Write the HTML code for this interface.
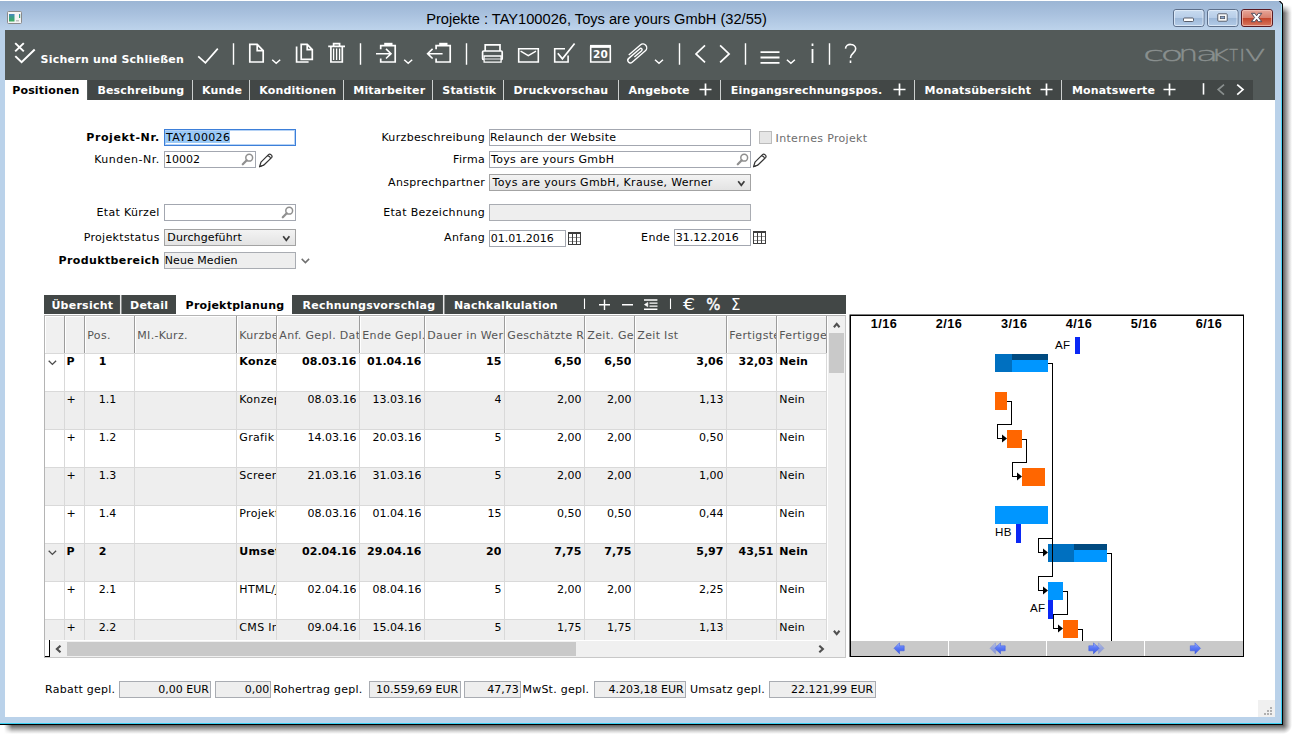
<!DOCTYPE html>
<html lang="de"><head><meta charset="utf-8"><title>Projekte</title>
<style>
*{box-sizing:border-box;margin:0;padding:0}
html,body{width:1298px;height:740px;overflow:hidden;background:#fff}
body{position:relative;font-family:"DejaVu Sans","Liberation Sans",sans-serif;font-size:11px;letter-spacing:.33px;color:#000}
.abs{position:absolute}
#shadowR{left:1283px;top:5px;width:9px;height:720px;background:linear-gradient(to right,#5e5e5e,#9a9a9a 35%,#d8d8d8 70%,#fff);-webkit-mask-image:linear-gradient(to bottom,transparent,#000 8px);mask-image:linear-gradient(to bottom,transparent,#000 8px)}
#shadowB{left:4px;top:725px;width:1279px;height:9px;background:linear-gradient(to bottom,#5e5e5e,#9a9a9a 35%,#d8d8d8 70%,#fff);-webkit-mask-image:linear-gradient(to right,transparent,#000 8px);mask-image:linear-gradient(to right,transparent,#000 8px)}
#shadowC{left:1283px;top:725px;width:9px;height:9px;background:radial-gradient(circle 9px at 0 0,#5e5e5e,#9a9a9a 35%,#d8d8d8 70%,#fff 100%)}
#cyR{left:1281px;top:3px;width:1px;height:720px;background:linear-gradient(to bottom,#a6e6f8,#4fd6f6 12%,#3ad2f5)}
#cyB{left:0;top:722px;width:1282px;height:1px;background:#3ad2f5}
#win{left:0;top:1px;width:1283px;height:724px;background:#bad2ea;border-right:1px solid #000;border-bottom:1px solid #000}
#titlebar{left:0;top:0;width:1282px;height:29px;background:linear-gradient(to bottom,#9bb5d4 0%,#a9c1de 45%,#bdd3eb 100%)}
#title{left:0;top:10px;width:1193px;text-align:center;font-family:"Liberation Sans",sans-serif;font-size:14.65px;letter-spacing:0;color:#000;white-space:nowrap}
#client{left:5px;top:29px;width:1270px;height:687px;background:#fff;overflow:hidden}
#toolbar{left:0;top:0;width:1270px;height:50px;background:#535a59}
#tabrow{left:0;top:50px;width:1270px;height:20px;background:#535a59}
.tab{position:absolute;top:0;height:20px;background:#424746;color:#fff;font-weight:bold;font-size:11px;letter-spacing:.17px;line-height:21px;white-space:nowrap}
.tab.act{background:#fff;color:#000}
.lbl{position:absolute;white-space:nowrap;text-align:right;height:16px;line-height:16px}
.b{font-weight:bold;letter-spacing:.4px}
.inp{position:absolute;border:1px solid #a3a7b0;background:#fff;white-space:nowrap;overflow:hidden}
.inp span{position:absolute;left:1.5px;top:0;line-height:15px;z-index:1}
.inp.g{background:#eee;border-color:#a9acb2}
.inp.sel{background:linear-gradient(to bottom,#f3f3f3,#e3e3e3);border-color:#a3a3a3}
.inp.foc{border-color:#3d7fd9;box-shadow:inset 0 0 0 1px #b5d2f5}
.hl{background:#99c9f7}
.num{letter-spacing:0}
</style></head><body>
<div class="abs" id="shadowR"></div><div class="abs" id="shadowB"></div><div class="abs" id="shadowC"></div>
<div class="abs" id="win">
<div class="abs" id="titlebar"></div><div class="abs" id="cyR"></div><div class="abs" id="cyB"></div>
<svg class="abs" style="left:1278px;top:0" width="5" height="5" viewBox="0 0 5 5"><path d="M1.500 0H5V3.500z" fill="#fff"/><path d="M1.200 -.300L5.300 3.800" stroke="#000" stroke-width="1.200" fill="none"/></svg>
<svg class="abs" style="left:7px;top:10px" width="15" height="13" viewBox="0 0 15 13"><rect x=".5" y=".5" width="14" height="12" rx="1" fill="#f4f4f4" stroke="#8a8a8a"/><defs><linearGradient id="ig" x1="0" y1="0" x2="0" y2="1"><stop offset="0" stop-color="#4a84c4"/><stop offset=".35" stop-color="#3a9a90"/><stop offset="1" stop-color="#3cac5c"/></linearGradient></defs><rect x="2" y="3" width="5.500" height="7.500" fill="url(#ig)"/><rect x="12" y="3" width="1.200" height="4" fill="url(#ig)"/><rect x="9" y="9" width="3" height="1.500" fill="#c0c0c0"/></svg><svg class="abs" style="left:1170px;top:6px" width="106" height="24" viewBox="1170 7 106 24"><defs><linearGradient id="cb" x1="0" y1="0" x2="0" y2="1"><stop offset="0" stop-color="#c9dcf0"/><stop offset=".48" stop-color="#b7cde8"/><stop offset=".5" stop-color="#9db8d8"/><stop offset="1" stop-color="#b4cce8"/></linearGradient><linearGradient id="cr" x1="0" y1="0" x2="0" y2="1"><stop offset="0" stop-color="#e8a99c"/><stop offset=".48" stop-color="#d8806e"/><stop offset=".5" stop-color="#c2432a"/><stop offset="1" stop-color="#d97a62"/></linearGradient></defs><rect x="1173.500" y="9.500" width="30.500" height="17" rx="2.500" fill="url(#cb)" stroke="#5d6f8a"/><rect x="1174.500" y="10.500" width="28.500" height="15" rx="1.500" fill="none" stroke="#e4eefa" stroke-opacity=".8"/><rect x="1207.500" y="9.500" width="30.500" height="17" rx="2.500" fill="url(#cb)" stroke="#5d6f8a"/><rect x="1208.500" y="10.500" width="28.500" height="15" rx="1.500" fill="none" stroke="#e4eefa" stroke-opacity=".8"/><rect x="1241.500" y="9.500" width="31" height="17" rx="2.500" fill="url(#cr)" stroke="#5a1a22"/><rect x="1242.500" y="10.500" width="29" height="15" rx="1.500" fill="none" stroke="#f2c4ba" stroke-opacity=".7"/><rect x="1183.500" y="18" width="10" height="3.500" rx="1" fill="#fff" stroke="#4a4f5c" stroke-width=".9"/><rect x="1217.800" y="13.800" width="9.400" height="7.400" rx=".8" fill="#fff" stroke="#4a4f5c" stroke-width=".9"/><rect x="1220.300" y="16.300" width="4.400" height="2.400" fill="#8aa6cc" stroke="#4a4f5c" stroke-width=".7"/><path d="M1251.4 13.3L1254.9 13.3L1256.6 15.8L1258.3 13.3L1261.8 13.3L1258.6 17.5L1261.8 21.7L1258.3 21.7L1256.6 19.2L1254.9 21.7L1251.4 21.7L1254.6 17.5z" fill="#fff" stroke="#4d4a5a" stroke-width="1" stroke-linejoin="round"/></svg>
<div class="abs" id="title">Projekte : TAY100026, Toys are yours GmbH (32/55)</div>
<div class="abs" id="client">
<div class="abs" id="toolbar"><svg class="abs" style="left:0;top:0" width="1270" height="50" viewBox="5 30 1270 50" fill="none" stroke="#fff" stroke-width="1.7" stroke-linecap="butt" stroke-linejoin="miter">
<path d="M15.200 43.100l8.600 8.300M23.800 43.100l-8.600 8.300" stroke-width="2"/>
<path d="M15.300 56.100l6.300 6.100 13.100-12.700" stroke-width="2"/>
<path d="M198.200 56.400l7.200 6.400 12.400-14.200"/>
<path d="M233.500 43.200v21.600M360.500 43.200v21.600M466.500 43.200v21.600M679.500 43.200v21.600M745.500 43.200v21.600M829.500 43.200v21.600" stroke-width="1.400"/>
<path d="M249.800 44.400h7.400l6 6.200V62h-13.400zM257.200 44.400v6.200h6"/>
<path d="M272.200 59.700l4 3.500 4-3.500" stroke-width="1.500"/>
<path d="M301.200 44.400h6l5.100 5.300v9.700h-11.100zM307.200 44.400v5.300h5.100M296.600 46.400V62h12"/>
<path d="M328.200 46.400h16.800M333.600 46.200v-2.600h6v2.600M330.900 46.800V62h11.400V46.800"/>
<path d="M333.600 48.600v11.400M336.600 48.600v11.400M339.600 48.600v11.400" stroke-width="1.300"/>
<path d="M380.700 49.200v-3.500h14.500V62h-14.500v-3.600"/>
<path d="M384.200 44.100h8.300" stroke-width="2.600"/>
<path d="M376 53.700h14.600M386 48.900l5 4.800-5 4.800" stroke-width="1.600"/>
<path d="M404.200 59.700l4 3.500 4-3.500" stroke-width="1.500"/>
<path d="M436.100 49.200v-3.500h14.100V62h-14.100v-3.600"/>
<path d="M439.200 44.100h8.300" stroke-width="2.600"/>
<path d="M428.400 53.700h14.200M432.600 48.900l-5 4.800 5 4.800" stroke-width="1.600"/>
<path d="M485.200 51v-6.100h14.800V51"/>
<path d="M484 59.400h-.4a1 1 0 0 1-1-1V52a1 1 0 0 1 1-1h17.600a1 1 0 0 1 1 1v6.400a1 1 0 0 1-1 1h-.4"/>
<path d="M484.100 56h17v6.100h-17z" stroke-width="1.300"/><path d="M484.500 59h16.200" stroke-width=".900"/>
<path d="M518.700 48.800h19.600V62h-19.600z" stroke-width="1.600"/><path d="M520.600 51.200l7.700 4.400 7.700-4.400" stroke-width="1.400"/>
<path d="M565 48.800h-10.300V62h13.400v-6.400" stroke-width="1.600"/>
<path d="M557.800 53.200l4.600 5.700 12.200-15.400"/>
<path d="M590.700 47h19.600v15h-19.600z" stroke-width="1.600"/><path d="M590 46.200h21" stroke-width="2.600"/>
<g transform="translate(636.700 53.200) rotate(-41) scale(1.2)"><path d="M-3.500 1.100H4.500A1.100 1.100 0 0 0 4.500-1.100H-7.850A2.150 2.150 0 0 0-7.850 3.200H6.800A3.200 3.200 0 0 0 6.800-3.200H-6" stroke-width="1.150"/></g>
<path d="M655 59.700l4 3.500 4-3.500" stroke-width="1.500"/>
<path d="M705 45.400l-9 8.500 9 8.500M720.100 45.400l9 8.500-9 8.500"/>
<path d="M760.500 52.100h19M760.500 57.500h19M760.500 62.800h19" stroke-width="1.800"/>
<path d="M786.900 59.700l4 3.500 4-3.500" stroke-width="1.500"/>
<path d="M812.500 43.600v2.400M812.500 48.900v14.200" stroke-width="1.800"/>
<path d="M845.500 48.600c.2-5.600 10.200-5.600 10.200.2 0 4-5.200 4.200-5.200 9.200M850.500 60.400v2.700" stroke-width="1.600"/>
<text x="600.600" y="57.700" text-anchor="middle" fill="#fff" stroke="none" font-family="DejaVu Sans,sans-serif" font-weight="bold" font-size="10.500">20</text>
<text x="40.600" y="63.200" fill="#fff" stroke="none" font-family="DejaVu Sans,sans-serif" font-weight="bold" font-size="11" letter-spacing=".24">Sichern und Schließen</text>
<g fill="#8a908f" stroke="#8a908f" stroke-width=".35" font-family="DejaVu Sans,sans-serif" font-weight="200"><text transform="translate(1143.10 60.9) scale(1.929 1)" font-size="20">c</text><text transform="translate(1160.60 60.9) scale(1.878 1)" font-size="20">o</text><text transform="translate(1178.35 60.7) scale(1.547 1)" font-size="20.5">n</text><text transform="translate(1195.63 60.9) scale(1.857 1)" font-size="20">a</text><text transform="translate(1211.11 60.7) scale(1.815 1)" font-size="15.4">K</text><text transform="translate(1229.31 60.7) scale(0.934 1)" font-size="15.4">T</text><text transform="translate(1239.200 60.700) scale(1.300 1)" font-size="15.4">I</text><text transform="translate(1245.13 60.7) scale(1.885 1)" font-size="15.4">V</text></g>
</svg>
</div>
<div class="abs" id="tabrow"><div class="tab act" style="left:0px;width:82px;padding-left:7.2px">Positionen</div><div class="tab" style="left:83px;width:104px;padding-left:9.4px">Beschreibung</div><div class="tab" style="left:188px;width:56px;padding-left:9px">Kunde</div><div class="tab" style="left:245px;width:93px;padding-left:9.2px">Konditionen</div><div class="tab" style="left:339px;width:88px;padding-left:9.3px">Mitarbeiter</div><div class="tab" style="left:428px;width:70px;padding-left:9.3px">Statistik</div><div class="tab" style="left:499px;width:114px;padding-left:9.5px">Druckvorschau</div><div class="tab" style="left:614px;width:101px;padding-left:9.5px">Angebote</div><div class="tab" style="left:716px;width:193px;padding-left:9.8px">Eingangsrechnungspos.</div><div class="tab" style="left:910px;width:146px;padding-left:9.6px">Monatsübersicht</div><div class="tab" style="left:1057px;width:138px;padding-left:9.9px">Monatswerte</div><div class="tab" style="left:1195px;width:53px"></div><svg class="abs" style="left:0;top:0" width="1270" height="20" viewBox="5 80 1270 20" fill="none" stroke="#fff" stroke-width="1.700"><path d="M699.5 89.5h12M705.5 83.5v12"/><path d="M893.5 89.5h12M899.5 83.5v12"/><path d="M1040.5 89.5h12M1046.5 83.5v12"/><path d="M1163.5 89.5h12M1169.5 83.5v12"/><path d="M192.5 80v20M249.5 80v20M343.5 80v20M432.5 80v20M503.5 80v20M618.5 80v20M720.5 80v20M914.5 80v20M1061.5 80v20" stroke="#cdd0cf" stroke-width="1"/><path d="M1203.500 83.200v11.400" stroke-width="1.600"/><path d="M1224 84.600l-5.800 5 5.800 5" stroke="#8a908f" stroke-width="1.700"/><path d="M1237.200 84.600l5.800 5-5.800 5" stroke-width="1.700"/></svg></div>
<div class="lbl b" style="right:1115.3px;top:100px;letter-spacing:0.62px">Projekt-Nr.</div><div class="inp foc" style="left:159px;top:99px;width:132px;height:17px"><span style="left:1px">TAY100026</span><div class="abs hl" style="left:0;top:.5px;width:64.5px;height:12.5px"></div></div><div class="lbl" style="right:1115.3px;top:122px;letter-spacing:0.5px">Kunden-Nr.</div><div class="inp " style="left:159px;top:121px;width:92px;height:17px"><span class="num" style="left:0px">10002</span><svg class="abs" style="left:76px;top:1.4px" width="14" height="13" viewBox="0 0 14 13" fill="none"><circle cx="8.200" cy="4.700" r="3.400" stroke="#8f8f8f" stroke-width="1.500" fill="#fff"/><path d="M5.700 7.300L1.800 11.200" stroke="#909090" stroke-width="2.300" stroke-linecap="round"/></svg></div><svg class="abs" style="left:252.6px;top:122.6px" width="16" height="15" viewBox="-.4 0 14.600 13.700" fill="none" stroke="#333" stroke-width="1.1" stroke-linejoin="round"><path d="M1 12.6l1.300-4.200L9.200 1.500c1.400-1.300 4.200 1.100 2.800 2.700L5 11z"/><path d="M8 2.700c1.500-.4 3.200 1.200 2.900 2.700M1 12.600l4-1.600"/></svg><div class="lbl" style="right:1115.3px;top:175px">Etat Kürzel</div><div class="inp " style="left:159px;top:174px;width:132px;height:17px"><svg class="abs" style="left:116px;top:1.4px" width="14" height="13" viewBox="0 0 14 13" fill="none"><circle cx="8.200" cy="4.700" r="3.400" stroke="#8f8f8f" stroke-width="1.500" fill="#fff"/><path d="M5.700 7.300L1.800 11.200" stroke="#909090" stroke-width="2.300" stroke-linecap="round"/></svg></div><div class="lbl" style="right:1115.3px;top:200px">Projektstatus</div><div class="inp sel" style="left:159px;top:199px;width:132px;height:17px"><span style="left:2.3px;letter-spacing:0.12px">Durchgeführt</span><svg class="abs" style="left:117.4px;top:4.6px" width="9" height="7" viewBox="0 0 9 7" fill="none" stroke="#3c3c3c" stroke-width="1.700"><path d="M1.200 1.300l3.100 4L7.400 1.300"/></svg></div><div class="lbl b" style="right:1115.3px;top:223px">Produktbereich</div><div class="inp g" style="left:159px;top:222px;width:132px;height:17px"><span style="left:-0.2px;letter-spacing:0.05px">Neue Medien</span></div><svg class="abs" style="left:296px;top:228px" width="10" height="6" viewBox="0 0 10 6" fill="none" stroke="#707070" stroke-width="1.500"><path d="M.700.900l3.700 3.700L8.100.900"/></svg><div class="lbl" style="right:789.9px;top:100px">Kurzbeschreibung</div><div class="inp " style="left:484px;top:99px;width:262px;height:17px"><span style="left:0px">Relaunch der Website</span></div><div class="abs" style="left:754px;top:101px;width:13px;height:13px;border:1px solid #bcbcbc;background:#e6e6e6"></div><div class="lbl" style="left:770.6px;top:101px;text-align:left;color:#6d6d6d">Internes Projekt</div><div class="lbl" style="right:789.9px;top:122px">Firma</div><div class="inp " style="left:484px;top:121px;width:262px;height:17px"><span style="left:1px">Toys are yours GmbH</span><svg class="abs" style="left:246.4px;top:1.4px" width="14" height="13" viewBox="0 0 14 13" fill="none"><circle cx="8.200" cy="4.700" r="3.400" stroke="#8f8f8f" stroke-width="1.500" fill="#fff"/><path d="M5.700 7.300L1.800 11.200" stroke="#909090" stroke-width="2.300" stroke-linecap="round"/></svg></div><svg class="abs" style="left:747.4px;top:122.6px" width="16" height="15" viewBox="-.4 0 14.600 13.700" fill="none" stroke="#333" stroke-width="1.1" stroke-linejoin="round"><path d="M1 12.6l1.300-4.200L9.200 1.500c1.400-1.300 4.200 1.100 2.800 2.700L5 11z"/><path d="M8 2.700c1.500-.4 3.200 1.200 2.900 2.700M1 12.600l4-1.600"/></svg><div class="lbl" style="right:789.9px;top:145px">Ansprechpartner</div><div class="inp sel" style="left:484px;top:144px;width:262px;height:17px"><span style="left:2.6px">Toys are yours GmbH, Krause, Werner</span><svg class="abs" style="left:247.4px;top:4.8px" width="9" height="7" viewBox="0 0 9 7" fill="none" stroke="#3c3c3c" stroke-width="1.700"><path d="M1.200 1.300l3.100 4L7.400 1.300"/></svg></div><div class="lbl" style="right:789.9px;top:175px">Etat Bezeichnung</div><div class="inp g" style="left:484px;top:174px;width:262px;height:17px"></div><div class="lbl" style="right:789.9px;top:200px">Anfang</div><div class="inp " style="left:484px;top:200px;width:77px;height:17px"><span class="num" style="left:0.8px">01.01.2016</span></div><svg class="abs" style="left:563px;top:202px" width="13" height="13" viewBox="0 0 13 13" fill="none" shape-rendering="crispEdges"><rect x="0" y="0" width="13" height="13" fill="#fff"/><path d="M0 5.500h13M0 9.500h13" stroke="#9a9a9a" stroke-width="1"/><path d="M.500 0v13M4.500 0v13M8.500 0v13M12.500 0v13M0 12.500h13" stroke="#3e3e3e" stroke-width="1"/><path d="M0 1h13" stroke="#3e3e3e" stroke-width="2"/></svg><div class="lbl" style="right:604.9px;top:200px">Ende</div><div class="inp " style="left:669px;top:199px;width:77px;height:17px"><span class="num" style="left:0.8px">31.12.2016</span></div><svg class="abs" style="left:748px;top:201px" width="13" height="13" viewBox="0 0 13 13" fill="none" shape-rendering="crispEdges"><rect x="0" y="0" width="13" height="13" fill="#fff"/><path d="M0 5.500h13M0 9.500h13" stroke="#9a9a9a" stroke-width="1"/><path d="M.500 0v13M4.500 0v13M8.500 0v13M12.500 0v13M0 12.500h13" stroke="#3e3e3e" stroke-width="1"/><path d="M0 1h13" stroke="#3e3e3e" stroke-width="2"/></svg>
<div class="abs" style="left:39px;top:265px;width:802px;height:19px;background:#424746"></div><div class="abs" style="left:39px;top:265px;width:76px;height:19px;color:#fff;font-weight:bold;line-height:22px;letter-spacing:.25px;white-space:nowrap;padding-left:7.4px">Übersicht</div><div class="abs" style="left:116.5px;top:265px;width:54.5px;height:19px;color:#fff;font-weight:bold;line-height:22px;letter-spacing:.25px;white-space:nowrap;padding-left:8.5px">Detail</div><div class="abs" style="left:171px;top:265px;width:116px;height:19px;background:#fff;color:#000;font-weight:bold;line-height:22px;letter-spacing:.25px;white-space:nowrap;padding-left:9.6px">Projektplanung</div><div class="abs" style="left:287px;top:265px;width:151px;height:19px;color:#fff;font-weight:bold;line-height:22px;letter-spacing:.25px;white-space:nowrap;padding-left:10.5px">Rechnungsvorschlag</div><div class="abs" style="left:439.5px;top:265px;width:139.5px;height:19px;color:#fff;font-weight:bold;line-height:22px;letter-spacing:.25px;white-space:nowrap;padding-left:9.4px">Nachkalkulation</div><svg class="abs" style="left:39px;top:265px" width="802" height="19" viewBox="44 295 802 19" fill="none" stroke="#fff"><path d="M120.7 295v19M443.7 295v19" stroke-width="1.5" stroke="#e8e8e8"/><path d="M584.500 298.500v10.500M670.500 298.500v10.500" stroke-width="1.100"/><path d="M599 304.700h11M604.500 299.500v10.500M622 304.700h11" stroke-width="1.400"/><path d="M644 300h13.400M649.500 303.100h8M649.500 306.100h8M644 309.200h13.400" stroke-width="1.400"/><path d="M647.800 302.400l-3.400 2.200 3.400 2.200z" fill="#fff" stroke-width=".6"/><text x="683" y="310.200" fill="#fff" stroke="none" font-family="DejaVu Sans,sans-serif" font-size="16.500" textLength="12.500" lengthAdjust="spacingAndGlyphs">€</text><text x="706.300" y="310" fill="#fff" font-family="DejaVu Sans,sans-serif" font-size="15.500" textLength="14.500" lengthAdjust="spacingAndGlyphs" stroke="#fff" stroke-width=".4">%</text><text x="731" y="310" fill="#fff" stroke="none" font-family="DejaVu Sans,sans-serif" font-size="15">Σ</text></svg><div class="abs" style="left:39px;top:285px;width:802px;height:343px;border:1px solid #b4b4b4;border-right-color:#c8c8c8;border-bottom-color:#c8c8c8;background:#fff;overflow:hidden"><div class="abs" style="left:0;top:0;width:782px;height:38px;background:#f0f0f0;border-top:1px solid #fff;border-bottom:1px solid #a0a0a0"></div><div class="abs" style="left:19px;top:0;width:2px;height:37px;background:#9c9c9c;border-right:1px solid #fff"></div><div class="abs" style="left:39px;top:0;width:2px;height:37px;background:#9c9c9c;border-right:1px solid #fff"></div><div class="abs" style="left:89px;top:0;width:2px;height:37px;background:#9c9c9c;border-right:1px solid #fff"></div><div class="abs" style="left:191px;top:0;width:2px;height:37px;background:#9c9c9c;border-right:1px solid #fff"></div><div class="abs" style="left:231px;top:0;width:2px;height:37px;background:#9c9c9c;border-right:1px solid #fff"></div><div class="abs" style="left:314px;top:0;width:2px;height:37px;background:#9c9c9c;border-right:1px solid #fff"></div><div class="abs" style="left:379px;top:0;width:2px;height:37px;background:#9c9c9c;border-right:1px solid #fff"></div><div class="abs" style="left:459px;top:0;width:2px;height:37px;background:#9c9c9c;border-right:1px solid #fff"></div><div class="abs" style="left:539px;top:0;width:2px;height:37px;background:#9c9c9c;border-right:1px solid #fff"></div><div class="abs" style="left:589px;top:0;width:2px;height:37px;background:#9c9c9c;border-right:1px solid #fff"></div><div class="abs" style="left:681px;top:0;width:2px;height:37px;background:#9c9c9c;border-right:1px solid #fff"></div><div class="abs" style="left:731px;top:0;width:2px;height:37px;background:#9c9c9c;border-right:1px solid #fff"></div><div class="abs" style="left:781px;top:0;width:2px;height:37px;background:#9c9c9c;border-right:1px solid #fff"></div><div class="abs" style="left:0;top:1px;width:1px;height:36px;background:#fff"></div><div class="abs" style="left:42.3px;top:12px;width:46.7px;height:16px;line-height:16px;color:#555;white-space:nowrap;overflow:hidden">Pos.</div><div class="abs" style="left:92.3px;top:12px;width:98.7px;height:16px;line-height:16px;color:#555;white-space:nowrap;overflow:hidden">MI.-Kurz.</div><div class="abs" style="left:194.3px;top:12px;width:36.7px;height:16px;line-height:16px;color:#555;white-space:nowrap;overflow:hidden">Kurzbeschreibung</div><div class="abs" style="left:234.3px;top:12px;width:79.7px;height:16px;line-height:16px;color:#555;white-space:nowrap;overflow:hidden">Anf. Gepl. Datum</div><div class="abs" style="left:317.3px;top:12px;width:61.7px;height:16px;line-height:16px;color:#555;white-space:nowrap;overflow:hidden">Ende Gepl. Datum</div><div class="abs" style="left:382.3px;top:12px;width:76.7px;height:16px;line-height:16px;color:#555;white-space:nowrap;overflow:hidden">Dauer in Werktagen</div><div class="abs" style="left:462.3px;top:12px;width:76.7px;height:16px;line-height:16px;color:#555;white-space:nowrap;overflow:hidden">Geschätzte Restzeit</div><div class="abs" style="left:542.3px;top:12px;width:46.7px;height:16px;line-height:16px;color:#555;white-space:nowrap;overflow:hidden">Zeit. Gepl.</div><div class="abs" style="left:592.3px;top:12px;width:88.7px;height:16px;line-height:16px;color:#555;white-space:nowrap;overflow:hidden">Zeit Ist</div><div class="abs" style="left:684.3px;top:12px;width:46.7px;height:16px;line-height:16px;color:#555;white-space:nowrap;overflow:hidden">Fertigstellungsgrad</div><div class="abs" style="left:734.3px;top:12px;width:46.7px;height:16px;line-height:16px;color:#555;white-space:nowrap;overflow:hidden">Fertiggestellt</div><div class="abs" style="left:0;top:37px;width:782px;height:38px;background:#fff;border-top:1px solid #d9d9d9"></div><svg class="abs" style="left:3px;top:44px" width="9" height="6" viewBox="0 0 9 6" fill="none" stroke="#4c4c4c" stroke-width="1.350"><path d="M.700.800l3.700 3.600L8.100.800"/></svg><div class="abs" style="left:21.6px;top:37.7px;width:17.4px;height:16px;line-height:16px;font-weight:bold;white-space:nowrap;overflow:hidden">P</div><div class="abs" style="left:53.8px;top:37.7px;width:35.2px;height:16px;line-height:16px;font-weight:bold;letter-spacing:0;white-space:nowrap;overflow:hidden">1</div><div class="abs" style="left:194.3px;top:37.7px;width:36.7px;height:16px;line-height:16px;font-weight:bold;white-space:nowrap;overflow:hidden">Konzeption</div><div class="abs" style="left:232px;top:37.7px;width:79.4px;height:16px;line-height:16px;font-weight:bold;letter-spacing:0;text-align:right;white-space:nowrap;overflow:hidden">08.03.16</div><div class="abs" style="left:315px;top:37.7px;width:61.4px;height:16px;line-height:16px;font-weight:bold;letter-spacing:0;text-align:right;white-space:nowrap;overflow:hidden">01.04.16</div><div class="abs" style="left:380px;top:37.7px;width:76.4px;height:16px;line-height:16px;font-weight:bold;letter-spacing:0;text-align:right;white-space:nowrap;overflow:hidden">15</div><div class="abs" style="left:460px;top:37.7px;width:76.4px;height:16px;line-height:16px;font-weight:bold;letter-spacing:0;text-align:right;white-space:nowrap;overflow:hidden">6,50</div><div class="abs" style="left:540px;top:37.7px;width:46.4px;height:16px;line-height:16px;font-weight:bold;letter-spacing:0;text-align:right;white-space:nowrap;overflow:hidden">6,50</div><div class="abs" style="left:590px;top:37.7px;width:88.4px;height:16px;line-height:16px;font-weight:bold;letter-spacing:0;text-align:right;white-space:nowrap;overflow:hidden">3,06</div><div class="abs" style="left:682px;top:37.7px;width:46.4px;height:16px;line-height:16px;font-weight:bold;letter-spacing:0;text-align:right;white-space:nowrap;overflow:hidden">32,03</div><div class="abs" style="left:734.3px;top:37.7px;width:46.7px;height:16px;line-height:16px;font-weight:bold;letter-spacing:.12px;white-space:nowrap;overflow:hidden">Nein</div><div class="abs" style="left:0;top:75px;width:782px;height:38px;background:#eee;border-top:1px solid #d9d9d9"></div><div class="abs" style="left:21.6px;top:75.7px;width:17.4px;height:16px;line-height:16px;white-space:nowrap;overflow:hidden">+</div><div class="abs" style="left:53.8px;top:75.7px;width:35.2px;height:16px;line-height:16px;letter-spacing:0;white-space:nowrap;overflow:hidden">1.1</div><div class="abs" style="left:194.3px;top:75.7px;width:36.7px;height:16px;line-height:16px;white-space:nowrap;overflow:hidden">Konzept erstellen</div><div class="abs" style="left:232px;top:75.7px;width:79.4px;height:16px;line-height:16px;letter-spacing:0;text-align:right;white-space:nowrap;overflow:hidden">08.03.16</div><div class="abs" style="left:315px;top:75.7px;width:61.4px;height:16px;line-height:16px;letter-spacing:0;text-align:right;white-space:nowrap;overflow:hidden">13.03.16</div><div class="abs" style="left:380px;top:75.7px;width:76.4px;height:16px;line-height:16px;letter-spacing:0;text-align:right;white-space:nowrap;overflow:hidden">4</div><div class="abs" style="left:460px;top:75.7px;width:76.4px;height:16px;line-height:16px;letter-spacing:0;text-align:right;white-space:nowrap;overflow:hidden">2,00</div><div class="abs" style="left:540px;top:75.7px;width:46.4px;height:16px;line-height:16px;letter-spacing:0;text-align:right;white-space:nowrap;overflow:hidden">2,00</div><div class="abs" style="left:590px;top:75.7px;width:88.4px;height:16px;line-height:16px;letter-spacing:0;text-align:right;white-space:nowrap;overflow:hidden">1,13</div><div class="abs" style="left:734.3px;top:75.7px;width:46.7px;height:16px;line-height:16px;letter-spacing:.12px;white-space:nowrap;overflow:hidden">Nein</div><div class="abs" style="left:0;top:113px;width:782px;height:38px;background:#fff;border-top:1px solid #d9d9d9"></div><div class="abs" style="left:21.6px;top:113.7px;width:17.4px;height:16px;line-height:16px;white-space:nowrap;overflow:hidden">+</div><div class="abs" style="left:53.8px;top:113.7px;width:35.2px;height:16px;line-height:16px;letter-spacing:0;white-space:nowrap;overflow:hidden">1.2</div><div class="abs" style="left:194.3px;top:113.7px;width:36.7px;height:16px;line-height:16px;white-space:nowrap;overflow:hidden">Grafik</div><div class="abs" style="left:232px;top:113.7px;width:79.4px;height:16px;line-height:16px;letter-spacing:0;text-align:right;white-space:nowrap;overflow:hidden">14.03.16</div><div class="abs" style="left:315px;top:113.7px;width:61.4px;height:16px;line-height:16px;letter-spacing:0;text-align:right;white-space:nowrap;overflow:hidden">20.03.16</div><div class="abs" style="left:380px;top:113.7px;width:76.4px;height:16px;line-height:16px;letter-spacing:0;text-align:right;white-space:nowrap;overflow:hidden">5</div><div class="abs" style="left:460px;top:113.7px;width:76.4px;height:16px;line-height:16px;letter-spacing:0;text-align:right;white-space:nowrap;overflow:hidden">2,00</div><div class="abs" style="left:540px;top:113.7px;width:46.4px;height:16px;line-height:16px;letter-spacing:0;text-align:right;white-space:nowrap;overflow:hidden">2,00</div><div class="abs" style="left:590px;top:113.7px;width:88.4px;height:16px;line-height:16px;letter-spacing:0;text-align:right;white-space:nowrap;overflow:hidden">0,50</div><div class="abs" style="left:734.3px;top:113.7px;width:46.7px;height:16px;line-height:16px;letter-spacing:.12px;white-space:nowrap;overflow:hidden">Nein</div><div class="abs" style="left:0;top:151px;width:782px;height:38px;background:#eee;border-top:1px solid #d9d9d9"></div><div class="abs" style="left:21.6px;top:151.7px;width:17.4px;height:16px;line-height:16px;white-space:nowrap;overflow:hidden">+</div><div class="abs" style="left:53.8px;top:151.7px;width:35.2px;height:16px;line-height:16px;letter-spacing:0;white-space:nowrap;overflow:hidden">1.3</div><div class="abs" style="left:194.3px;top:151.7px;width:36.7px;height:16px;line-height:16px;white-space:nowrap;overflow:hidden">Screendesign</div><div class="abs" style="left:232px;top:151.7px;width:79.4px;height:16px;line-height:16px;letter-spacing:0;text-align:right;white-space:nowrap;overflow:hidden">21.03.16</div><div class="abs" style="left:315px;top:151.7px;width:61.4px;height:16px;line-height:16px;letter-spacing:0;text-align:right;white-space:nowrap;overflow:hidden">31.03.16</div><div class="abs" style="left:380px;top:151.7px;width:76.4px;height:16px;line-height:16px;letter-spacing:0;text-align:right;white-space:nowrap;overflow:hidden">5</div><div class="abs" style="left:460px;top:151.7px;width:76.4px;height:16px;line-height:16px;letter-spacing:0;text-align:right;white-space:nowrap;overflow:hidden">2,00</div><div class="abs" style="left:540px;top:151.7px;width:46.4px;height:16px;line-height:16px;letter-spacing:0;text-align:right;white-space:nowrap;overflow:hidden">2,00</div><div class="abs" style="left:590px;top:151.7px;width:88.4px;height:16px;line-height:16px;letter-spacing:0;text-align:right;white-space:nowrap;overflow:hidden">1,00</div><div class="abs" style="left:734.3px;top:151.7px;width:46.7px;height:16px;line-height:16px;letter-spacing:.12px;white-space:nowrap;overflow:hidden">Nein</div><div class="abs" style="left:0;top:189px;width:782px;height:38px;background:#fff;border-top:1px solid #d9d9d9"></div><div class="abs" style="left:21.6px;top:189.7px;width:17.4px;height:16px;line-height:16px;white-space:nowrap;overflow:hidden">+</div><div class="abs" style="left:53.8px;top:189.7px;width:35.2px;height:16px;line-height:16px;letter-spacing:0;white-space:nowrap;overflow:hidden">1.4</div><div class="abs" style="left:194.3px;top:189.7px;width:36.7px;height:16px;line-height:16px;white-space:nowrap;overflow:hidden">Projektleitung</div><div class="abs" style="left:232px;top:189.7px;width:79.4px;height:16px;line-height:16px;letter-spacing:0;text-align:right;white-space:nowrap;overflow:hidden">08.03.16</div><div class="abs" style="left:315px;top:189.7px;width:61.4px;height:16px;line-height:16px;letter-spacing:0;text-align:right;white-space:nowrap;overflow:hidden">01.04.16</div><div class="abs" style="left:380px;top:189.7px;width:76.4px;height:16px;line-height:16px;letter-spacing:0;text-align:right;white-space:nowrap;overflow:hidden">15</div><div class="abs" style="left:460px;top:189.7px;width:76.4px;height:16px;line-height:16px;letter-spacing:0;text-align:right;white-space:nowrap;overflow:hidden">0,50</div><div class="abs" style="left:540px;top:189.7px;width:46.4px;height:16px;line-height:16px;letter-spacing:0;text-align:right;white-space:nowrap;overflow:hidden">0,50</div><div class="abs" style="left:590px;top:189.7px;width:88.4px;height:16px;line-height:16px;letter-spacing:0;text-align:right;white-space:nowrap;overflow:hidden">0,44</div><div class="abs" style="left:734.3px;top:189.7px;width:46.7px;height:16px;line-height:16px;letter-spacing:.12px;white-space:nowrap;overflow:hidden">Nein</div><div class="abs" style="left:0;top:227px;width:782px;height:38px;background:#eee;border-top:1px solid #d9d9d9"></div><svg class="abs" style="left:3px;top:234px" width="9" height="6" viewBox="0 0 9 6" fill="none" stroke="#4c4c4c" stroke-width="1.350"><path d="M.700.800l3.700 3.600L8.100.800"/></svg><div class="abs" style="left:21.6px;top:227.7px;width:17.4px;height:16px;line-height:16px;font-weight:bold;white-space:nowrap;overflow:hidden">P</div><div class="abs" style="left:53.8px;top:227.7px;width:35.2px;height:16px;line-height:16px;font-weight:bold;letter-spacing:0;white-space:nowrap;overflow:hidden">2</div><div class="abs" style="left:194.3px;top:227.7px;width:36.7px;height:16px;line-height:16px;font-weight:bold;white-space:nowrap;overflow:hidden">Umsetzung</div><div class="abs" style="left:232px;top:227.7px;width:79.4px;height:16px;line-height:16px;font-weight:bold;letter-spacing:0;text-align:right;white-space:nowrap;overflow:hidden">02.04.16</div><div class="abs" style="left:315px;top:227.7px;width:61.4px;height:16px;line-height:16px;font-weight:bold;letter-spacing:0;text-align:right;white-space:nowrap;overflow:hidden">29.04.16</div><div class="abs" style="left:380px;top:227.7px;width:76.4px;height:16px;line-height:16px;font-weight:bold;letter-spacing:0;text-align:right;white-space:nowrap;overflow:hidden">20</div><div class="abs" style="left:460px;top:227.7px;width:76.4px;height:16px;line-height:16px;font-weight:bold;letter-spacing:0;text-align:right;white-space:nowrap;overflow:hidden">7,75</div><div class="abs" style="left:540px;top:227.7px;width:46.4px;height:16px;line-height:16px;font-weight:bold;letter-spacing:0;text-align:right;white-space:nowrap;overflow:hidden">7,75</div><div class="abs" style="left:590px;top:227.7px;width:88.4px;height:16px;line-height:16px;font-weight:bold;letter-spacing:0;text-align:right;white-space:nowrap;overflow:hidden">5,97</div><div class="abs" style="left:682px;top:227.7px;width:46.4px;height:16px;line-height:16px;font-weight:bold;letter-spacing:0;text-align:right;white-space:nowrap;overflow:hidden">43,51</div><div class="abs" style="left:734.3px;top:227.7px;width:46.7px;height:16px;line-height:16px;font-weight:bold;letter-spacing:.12px;white-space:nowrap;overflow:hidden">Nein</div><div class="abs" style="left:0;top:265px;width:782px;height:38px;background:#fff;border-top:1px solid #d9d9d9"></div><div class="abs" style="left:21.6px;top:265.7px;width:17.4px;height:16px;line-height:16px;white-space:nowrap;overflow:hidden">+</div><div class="abs" style="left:53.8px;top:265.7px;width:35.2px;height:16px;line-height:16px;letter-spacing:0;white-space:nowrap;overflow:hidden">2.1</div><div class="abs" style="left:194.3px;top:265.7px;width:36.7px;height:16px;line-height:16px;white-space:nowrap;overflow:hidden">HTML/JS</div><div class="abs" style="left:232px;top:265.7px;width:79.4px;height:16px;line-height:16px;letter-spacing:0;text-align:right;white-space:nowrap;overflow:hidden">02.04.16</div><div class="abs" style="left:315px;top:265.7px;width:61.4px;height:16px;line-height:16px;letter-spacing:0;text-align:right;white-space:nowrap;overflow:hidden">08.04.16</div><div class="abs" style="left:380px;top:265.7px;width:76.4px;height:16px;line-height:16px;letter-spacing:0;text-align:right;white-space:nowrap;overflow:hidden">5</div><div class="abs" style="left:460px;top:265.7px;width:76.4px;height:16px;line-height:16px;letter-spacing:0;text-align:right;white-space:nowrap;overflow:hidden">2,00</div><div class="abs" style="left:540px;top:265.7px;width:46.4px;height:16px;line-height:16px;letter-spacing:0;text-align:right;white-space:nowrap;overflow:hidden">2,00</div><div class="abs" style="left:590px;top:265.7px;width:88.4px;height:16px;line-height:16px;letter-spacing:0;text-align:right;white-space:nowrap;overflow:hidden">2,25</div><div class="abs" style="left:734.3px;top:265.7px;width:46.7px;height:16px;line-height:16px;letter-spacing:.12px;white-space:nowrap;overflow:hidden">Nein</div><div class="abs" style="left:0;top:303px;width:782px;height:21px;background:#eee;border-top:1px solid #d9d9d9"></div><div class="abs" style="left:21.6px;top:303.7px;width:17.4px;height:16px;line-height:16px;white-space:nowrap;overflow:hidden">+</div><div class="abs" style="left:53.8px;top:303.7px;width:35.2px;height:16px;line-height:16px;letter-spacing:0;white-space:nowrap;overflow:hidden">2.2</div><div class="abs" style="left:194.3px;top:303.7px;width:36.7px;height:16px;line-height:16px;white-space:nowrap;overflow:hidden">CMS Integration</div><div class="abs" style="left:232px;top:303.7px;width:79.4px;height:16px;line-height:16px;letter-spacing:0;text-align:right;white-space:nowrap;overflow:hidden">09.04.16</div><div class="abs" style="left:315px;top:303.7px;width:61.4px;height:16px;line-height:16px;letter-spacing:0;text-align:right;white-space:nowrap;overflow:hidden">15.04.16</div><div class="abs" style="left:380px;top:303.7px;width:76.4px;height:16px;line-height:16px;letter-spacing:0;text-align:right;white-space:nowrap;overflow:hidden">5</div><div class="abs" style="left:460px;top:303.7px;width:76.4px;height:16px;line-height:16px;letter-spacing:0;text-align:right;white-space:nowrap;overflow:hidden">1,75</div><div class="abs" style="left:540px;top:303.7px;width:46.4px;height:16px;line-height:16px;letter-spacing:0;text-align:right;white-space:nowrap;overflow:hidden">1,75</div><div class="abs" style="left:590px;top:303.7px;width:88.4px;height:16px;line-height:16px;letter-spacing:0;text-align:right;white-space:nowrap;overflow:hidden">1,13</div><div class="abs" style="left:734.3px;top:303.7px;width:46.7px;height:16px;line-height:16px;letter-spacing:.12px;white-space:nowrap;overflow:hidden">Nein</div><div class="abs" style="left:19px;top:38px;width:1px;height:287px;background:#d9d9d9"></div><div class="abs" style="left:39px;top:38px;width:1px;height:287px;background:#d9d9d9"></div><div class="abs" style="left:89px;top:38px;width:1px;height:287px;background:#d9d9d9"></div><div class="abs" style="left:191px;top:38px;width:1px;height:287px;background:#d9d9d9"></div><div class="abs" style="left:231px;top:38px;width:1px;height:287px;background:#d9d9d9"></div><div class="abs" style="left:314px;top:38px;width:1px;height:287px;background:#d9d9d9"></div><div class="abs" style="left:379px;top:38px;width:1px;height:287px;background:#d9d9d9"></div><div class="abs" style="left:459px;top:38px;width:1px;height:287px;background:#d9d9d9"></div><div class="abs" style="left:539px;top:38px;width:1px;height:287px;background:#d9d9d9"></div><div class="abs" style="left:589px;top:38px;width:1px;height:287px;background:#d9d9d9"></div><div class="abs" style="left:681px;top:38px;width:1px;height:287px;background:#d9d9d9"></div><div class="abs" style="left:731px;top:38px;width:1px;height:287px;background:#d9d9d9"></div><div class="abs" style="left:781px;top:38px;width:1px;height:287px;background:#d9d9d9"></div><div class="abs" style="left:782px;top:38px;width:1px;height:287px;background:#fff"></div><div class="abs" style="left:783px;top:0;width:17px;height:325px;background:#f0f0f0"></div><div class="abs" style="left:784px;top:17px;width:15px;height:40px;background:#c9c9c9"></div><svg class="abs" style="left:787.7px;top:6px" width="8" height="6" viewBox="0 0 8 6" fill="none" stroke="#505050" stroke-width="2.100"><path d="M.900 5.200l2.800-3.300 2.800 3.300"/></svg><svg class="abs" style="left:787.7px;top:313.5px" width="8" height="6" viewBox="0 0 8 6" fill="none" stroke="#505050" stroke-width="2.100"><path d="M.900.800l2.800 3.300L6.500.800"/></svg><div class="abs" style="left:0;top:324px;width:800px;height:17px;background:#f0f0f0"></div><div class="abs" style="left:0;top:324px;width:783px;height:1px;background:#fff"></div><div class="abs" style="left:22px;top:325.5px;width:509px;height:14px;background:#c9c9c9"></div><svg class="abs" style="left:9.6px;top:328.5px" width="7" height="8" viewBox="0 0 7 8" fill="none" stroke="#505050" stroke-width="2.100"><path d="M5.500.700L1.900 4l3.600 3.300"/></svg><svg class="abs" style="left:772.6px;top:328.5px" width="7" height="8" viewBox="0 0 7 8" fill="none" stroke="#505050" stroke-width="2.100"><path d="M1.300.700l3.600 3.300-3.600 3.300"/></svg><div class="abs" style="left:0;top:324px;width:5px;height:17px;background:#fff;border-right:1px solid #000;border-bottom:1px solid #000"></div></div>
<svg class="abs" style="left:841px;top:282px" width="402" height="348" viewBox="846 312 402 348" shape-rendering="crispEdges"><g shape-rendering="auto"><path d="M849.500 314.500h394.500v342.500h-394.500z" fill="#000"/><path d="M851 316h392v339.500h-392z" fill="#fff"/></g><text x="884" y="327.800" text-anchor="middle" font-family="Liberation Sans,sans-serif" font-weight="bold" font-size="12.700" letter-spacing=".450" fill="#000">1/16</text><text x="949" y="327.800" text-anchor="middle" font-family="Liberation Sans,sans-serif" font-weight="bold" font-size="12.700" letter-spacing=".450" fill="#000">2/16</text><text x="1014.2" y="327.800" text-anchor="middle" font-family="Liberation Sans,sans-serif" font-weight="bold" font-size="12.700" letter-spacing=".450" fill="#000">3/16</text><text x="1079" y="327.800" text-anchor="middle" font-family="Liberation Sans,sans-serif" font-weight="bold" font-size="12.700" letter-spacing=".450" fill="#000">4/16</text><text x="1144" y="327.800" text-anchor="middle" font-family="Liberation Sans,sans-serif" font-weight="bold" font-size="12.700" letter-spacing=".450" fill="#000">5/16</text><text x="1209" y="327.800" text-anchor="middle" font-family="Liberation Sans,sans-serif" font-weight="bold" font-size="12.700" letter-spacing=".450" fill="#000">6/16</text><text x="1055" y="349.200" font-family="Liberation Sans,sans-serif" font-size="11.600" fill="#000">AF</text><rect x="1075" y="337" width="5" height="17" fill="#0a28f5"/><rect x="995" y="354" width="17" height="18" fill="#0070c0"/><rect x="1012" y="354" width="36" height="6" fill="#004a80"/><rect x="1012" y="360" width="36" height="12" fill="#0096ff"/><rect x="995" y="392" width="12" height="18" fill="#ff6600"/><rect x="1007" y="430" width="15" height="18" fill="#ff6600"/><rect x="1022" y="468" width="23" height="18" fill="#ff6600"/><rect x="995" y="506" width="53" height="18" fill="#0096ff"/><text x="995" y="535.900" font-family="Liberation Sans,sans-serif" font-size="11.600" fill="#000">HB</text><rect x="1016" y="524" width="5" height="18.5" fill="#0a28f5"/><rect x="1048" y="544" width="26" height="18" fill="#0070c0"/><rect x="1074" y="544" width="33" height="6" fill="#004a80"/><rect x="1074" y="550" width="33" height="12" fill="#0096ff"/><rect x="1048" y="582" width="15" height="18" fill="#0096ff"/><text x="1030" y="611.700" font-family="Liberation Sans,sans-serif" font-size="11.600" fill="#000">AF</text><rect x="1048" y="600" width="5" height="18.5" fill="#0a28f5"/><rect x="1063" y="620" width="15" height="18" fill="#ff6600"/><path fill="none" stroke="#000" stroke-width="1" d="M1048 363.500h4.500V576.500h-14v14h5"/><path fill="none" stroke="#000" stroke-width="1" d="M1052.500 538.500h-14v14h5"/><path fill="none" stroke="#000" stroke-width="1" d="M1007 401.500h4.500v23h-14v14h5"/><path fill="none" stroke="#000" stroke-width="1" d="M1022 439.500h4.500v23h-14v14h5"/><path fill="none" stroke="#000" stroke-width="1" d="M1107 553.500h4.500V641"/><path fill="none" stroke="#000" stroke-width="1" d="M1063 591.500h4.500v23h-14v14h5"/><path fill="none" stroke="#000" stroke-width="1" d="M1078 629.500h4.500V641"/><path d="M1002 434.5v8l5-4z" fill="#000" shape-rendering="auto"/><path d="M1017 472.5v8l5-4z" fill="#000" shape-rendering="auto"/><path d="M1043 548.5v8l5-4z" fill="#000" shape-rendering="auto"/><path d="M1043 586.5v8l5-4z" fill="#000" shape-rendering="auto"/><path d="M1058 624.5v8l5-4z" fill="#000" shape-rendering="auto"/><rect x="851" y="641" width="392" height="14.5" fill="#c9c9c9"/><rect x="948" y="641" width="1" height="14.5" fill="#fff"/><rect x="1046" y="641" width="1" height="14.5" fill="#fff"/><rect x="1144" y="641" width="1" height="14.5" fill="#fff"/><defs><linearGradient id="ag" x1="0" y1="0" x2="0" y2="1"><stop offset="0" stop-color="#a6bbff"/><stop offset=".45" stop-color="#5c7af6"/><stop offset="1" stop-color="#3a58e4"/></linearGradient></defs><path d="M894 648.300l5.500-5.500v3h4.700v5h-4.700v3z" fill="url(#ag)" stroke="#3454e2" stroke-width=".5" opacity="1" shape-rendering="auto"/><path d="M990 648.300l5.500-5.500v3h4.700v5h-4.700v3z" fill="url(#ag)" stroke="#3454e2" stroke-width=".5" opacity="0.45" shape-rendering="auto"/><path d="M995 648.300l5.500-5.500v3h4.700v5h-4.700v3z" fill="url(#ag)" stroke="#3454e2" stroke-width=".5" opacity="1" shape-rendering="auto"/><path d="M1104 648.300l-5.500-5.500v3h-4.700v5h4.700v3z" fill="url(#ag)" stroke="#3454e2" stroke-width=".5" opacity="0.45" shape-rendering="auto"/><path d="M1099 648.300l-5.500-5.500v3h-4.700v5h4.700v3z" fill="url(#ag)" stroke="#3454e2" stroke-width=".5" opacity="1" shape-rendering="auto"/><path d="M1200.5 648.300l-5.500-5.500v3h-4.700v5h4.700v3z" fill="url(#ag)" stroke="#3454e2" stroke-width=".5" opacity="1" shape-rendering="auto"/></svg>
<div class="lbl" style="left:40.1px;top:652px;text-align:left;letter-spacing:.25px">Rabatt gepl.</div><div class="abs" style="left:114px;top:651px;width:92px;height:17px;border:1px solid #a9acb2;background:#eee;overflow:hidden"><div class="abs num" style="right:1px;top:0;line-height:15px;white-space:nowrap">0,00 EUR</div></div><div class="abs" style="left:209.5px;top:651px;width:56.5px;height:17px;border:1px solid #a9acb2;background:#eee;overflow:hidden"><div class="abs num" style="right:0.7px;top:0;line-height:15px;white-space:nowrap">0,00</div></div><div class="lbl" style="left:268.3px;top:652px;text-align:left;letter-spacing:.25px">Rohertrag gepl.</div><div class="abs" style="left:363.5px;top:651px;width:92.5px;height:17px;border:1px solid #a9acb2;background:#eee;overflow:hidden"><div class="abs num" style="right:1.8px;top:0;line-height:15px;white-space:nowrap">10.559,69 EUR</div></div><div class="abs" style="left:459px;top:651px;width:56.5px;height:17px;border:1px solid #a9acb2;background:#eee;overflow:hidden"><div class="abs num" style="right:0.8px;top:0;line-height:15px;white-space:nowrap">47,73</div></div><div class="lbl" style="left:517.4px;top:652px;text-align:left;letter-spacing:.25px">MwSt. gepl.</div><div class="abs" style="left:589px;top:651px;width:92px;height:17px;border:1px solid #a9acb2;background:#eee;overflow:hidden"><div class="abs num" style="right:1.3px;top:0;line-height:15px;white-space:nowrap">4.203,18 EUR</div></div><div class="lbl" style="left:685px;top:652px;text-align:left;letter-spacing:.25px">Umsatz gepl.</div><div class="abs" style="left:764px;top:651px;width:106.5px;height:17px;border:1px solid #a9acb2;background:#eee;overflow:hidden"><div class="abs num" style="right:1.3px;top:0;line-height:15px;white-space:nowrap">22.121,99 EUR</div></div><div class="abs" style="left:1253px;top:670px;width:17px;height:17px;background:#f0f0f0"></div><svg class="abs" style="left:1259px;top:677px" width="9" height="9" viewBox="0 0 9 9" fill="#b0b0b0"><rect x="6" y="0" width="2" height="2"/><rect x="3" y="3" width="2" height="2"/><rect x="6" y="3" width="2" height="2"/><rect x="0" y="6" width="2" height="2"/><rect x="3" y="6" width="2" height="2"/><rect x="6" y="6" width="2" height="2"/></svg>
</div>
</div>
</body></html>
